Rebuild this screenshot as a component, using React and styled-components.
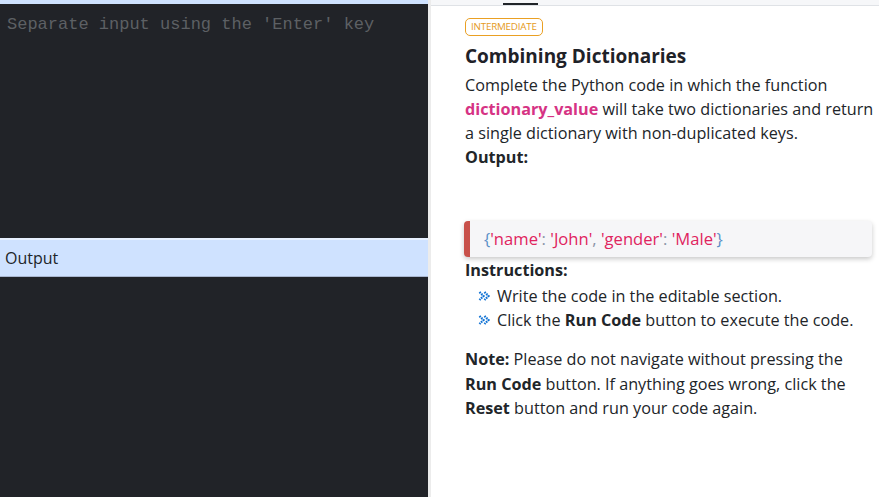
import React from "react";
import styled, { createGlobalStyle } from "styled-components";

const Global = createGlobalStyle`
  html, body {
    margin: 0;
    padding: 0;
    height: 100%;
    overflow: hidden;
  }
  #root {
    height: 100%;
  }
`;

const Page = styled.div`
  display: flex;
  width: 879px;
  height: 497px;
  background: #ffffff;
`;

const EditorSide = styled.div`
  width: 428px;
  display: flex;
  flex-direction: column;
  background: #212328;
`;

const TopStrip = styled.div`
  height: 4px;
  background: #cfe2ff;
`;

const InputArea = styled.div`
  height: 234px;
  padding: 11px 7px;
  box-sizing: border-box;
  font-family: "Liberation Mono", monospace;
  font-size: 17px;
  color: #5d6064;
`;

const OutputBar = styled.div`
  height: 39px;
  box-sizing: border-box;
  display: flex;
  align-items: center;
  padding: 0 5px 1px;
  background: #cfe2ff;
  border-top: 2px solid #e7f0ff;
  border-bottom: 1px solid #a9b6cf;
  font-family: "Open Sans", sans-serif;
  font-size: 16px;
  color: #212529;
`;

const Divider = styled.div`
  width: 3px;
  background: #ececec;
`;

const InfoSide = styled.div`
  flex: 1;
  display: flex;
  flex-direction: column;
  font-family: "Open Sans", sans-serif;
  color: #212529;
`;

const TabStrip = styled.div`
  height: 5px;
  background: #f6f7f9;
  border-bottom: 1px solid #dfe2e6;
  position: relative;
`;

const TabMark = styled.div`
  position: absolute;
  left: 72px;
  top: 3px;
  width: 35px;
  height: 2px;
  background: #212529;
`;

const Content = styled.div`
  padding: 12px 0 0 34px;
  font-size: 16.2px;
  line-height: 24px;
`;

const Badge = styled.div`
  width: fit-content;
  box-sizing: border-box;
  height: 18px;
  border: 1px solid #eaa023;
  color: #e59a1c;
  border-radius: 5px;
  font-size: 9.8px;
  line-height: 16px;
  padding: 0 5px;
  letter-spacing: -0.2px;
`;

const Title = styled.h1`
  margin: 7px 0 4px;
  font-size: 19px;
  line-height: 26px;
  font-weight: 700;
  color: #1f2228;
`;

const Text = styled.p`
  margin: 0;
`;

const Fn = styled.b`
  color: #d63384;
`;

const Label = styled.div`
  font-weight: 700;
  margin-top: ${(p) => p.gap || 0};
`;

const CodeBox = styled.div`
  margin: 52px 7px 0 -1px;
  height: 36px;
  display: flex;
  align-items: center;
  padding-left: 14px;
  background: #f6f6f8;
  border-left: 6px solid #c8514a;
  border-radius: 4px;
  box-shadow: 0 2px 5px rgba(0, 0, 0, 0.22);
  font-size: 16.6px;
`;

const Punct = styled.span`
  color: ${(p) => p.color || "#8a94a6"};
`;

const Str = styled.span`
  color: #e0245e;
`;

const List = styled.ul`
  list-style: none;
  margin: 2px 0 0;
  padding: 0 0 0 13px;
`;

const Item = styled.li`
  display: flex;
  align-items: center;
  gap: 6px;
`;

const Note = styled.p`
  margin: 15px 0 0;
  line-height: 24.5px;
  width: 395px;
`;

const Chevrons = () => (
  <svg width="13" height="12" viewBox="0 0 13 12">
    <path d="M1.5 2l4 4-4 4M6.5 2l4 4-4 4" fill="none" stroke="#0b6fd3" strokeWidth="2.2" strokeDasharray="1.6 0.9" />
  </svg>
);

export default function App() {
  return (
    <Page>
      <Global />
      <EditorSide>
        <TopStrip />
        <InputArea>Separate input using the 'Enter' key</InputArea>
        <OutputBar>Output</OutputBar>
      </EditorSide>
      <Divider />
      <InfoSide>
        <TabStrip>
          <TabMark />
        </TabStrip>
        <Content>
          <Badge>INTERMEDIATE</Badge>
          <Title>Combining Dictionaries</Title>
          <Text>
            Complete the Python code in which the function <Fn>dictionary_value</Fn> will take two
            dictionaries and return a single dictionary with non-duplicated keys.
          </Text>
          <Label>Output:</Label>
          <CodeBox>
            <Punct color="#5b8fc7">{"{"}</Punct>
            <Str>'name'</Str>
            <Punct>:&nbsp;</Punct>
            <Str>'John'</Str>
            <Punct>,&nbsp;</Punct>
            <Str>'gender'</Str>
            <Punct>:&nbsp;</Punct>
            <Str>'Male'</Str>
            <Punct color="#5b8fc7">{"}"}</Punct>
          </CodeBox>
          <Label gap="1px">Instructions:</Label>
          <List>
            <Item>
              <Chevrons />
              Write the code in the editable section.
            </Item>
            <Item>
              <Chevrons />
              <span>
                Click the <b>Run Code</b> button to execute the code.
              </span>
            </Item>
          </List>
          <Note>
            <b>Note:</b> Please do not navigate without pressing the <b>Run Code</b> button. If
            anything goes wrong, click the <b>Reset</b> button and run your code again.
          </Note>
        </Content>
      </InfoSide>
    </Page>
  );
}
